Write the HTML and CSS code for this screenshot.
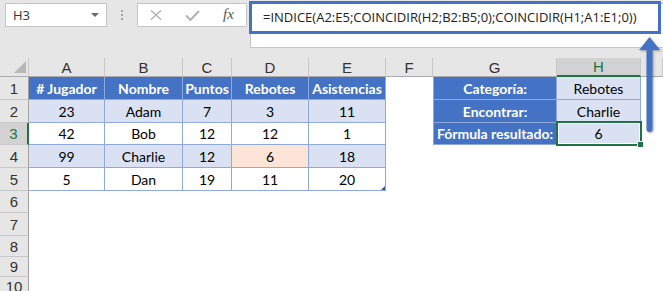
FILE: index.html
```html
<!DOCTYPE html>
<html lang="es">
<head>
<meta charset="utf-8">
<title>INDICE y COINCIDIR</title>
<link rel="stylesheet" href="styles.css">
</head>
<body>
<div class="app">
  <div class="topbar">
    <div class="namebox"><span class="name">H3</span><span class="caret"></span></div>
    <div class="grip"><i></i><i></i><i></i></div>
    <div class="fnbox">
      <svg class="ic-x" width="12" height="10" viewBox="0 0 12 10"><path d="M1 0.5 L11 9.5 M11 0.5 L1 9.5"/></svg>
      <svg class="ic-check" width="15" height="11" viewBox="0 0 15 11"><path d="M1 5.5 L5.5 10 L14 1"/></svg>
      <span class="fx">fx</span>
    </div>
    <div class="formula">
      <div class="formula-text">=INDICE(A2:E5;COINCIDIR(H2;B2:B5;0);COINCIDIR(H1;A1:E1;0))</div>
      <div class="highlight"></div>
    </div>
  </div>

  <div class="sheet">
    <div class="ch corner"><span class="tri"></span></div>
    <div class="ch">A</div>
    <div class="ch">B</div>
    <div class="ch">C</div>
    <div class="ch">D</div>
    <div class="ch">E</div>
    <div class="ch">F</div>
    <div class="ch">G</div>
    <div class="ch sel">H</div>
    <div class="ch"></div>

    <div class="rh">1</div>
    <div class="c hd">#&nbsp;Jugador</div>
    <div class="c hd">Nombre</div>
    <div class="c hd">Puntos</div>
    <div class="c hd">Rebotes</div>
    <div class="c hd">Asistencias</div>
    <div class="e"></div>
    <div class="c hd gl">Categoría:</div>
    <div class="c band">Rebotes</div>
    <div class="e"></div>

    <div class="rh">2</div>
    <div class="c band">23</div>
    <div class="c band">Adam</div>
    <div class="c band">7</div>
    <div class="c band">3</div>
    <div class="c band">11</div>
    <div class="e"></div>
    <div class="c hd gl">Encontrar:</div>
    <div class="c band">Charlie</div>
    <div class="e"></div>

    <div class="rh sel">3</div>
    <div class="c">42</div>
    <div class="c">Bob</div>
    <div class="c">12</div>
    <div class="c">12</div>
    <div class="c">1</div>
    <div class="e"></div>
    <div class="c hd gl">Fórmula resultado:</div>
    <div class="c band active">6<span class="selbox"><span class="handle"></span></span></div>
    <div class="e"></div>

    <div class="rh">4</div>
    <div class="c band">99</div>
    <div class="c band">Charlie</div>
    <div class="c band">12</div>
    <div class="c peach">6</div>
    <div class="c band">18</div>
    <div class="e span4"></div>

    <div class="rh">5</div>
    <div class="c">5</div>
    <div class="c">Dan</div>
    <div class="c">19</div>
    <div class="c">11</div>
    <div class="c last">20<span class="resize"></span></div>
    <div class="e span4"></div>

    <div class="rh">6</div><div class="e span9"></div>
    <div class="rh">7</div><div class="e span9"></div>
    <div class="rh">8</div><div class="e span9"></div>
    <div class="rh">9</div><div class="e span9"></div>
    <div class="rh">10</div><div class="e span9"></div>
  </div>

  <svg class="arrow" width="27" height="106" viewBox="0 0 27 106">
    <polygon points="13.5,3 24,16 3,16"/>
    <rect x="10.5" y="14" width="6" height="84" rx="3"/>
  </svg>
</div>
</body>
</html>
```

FILE: styles.css
```css
* { box-sizing: border-box; }
html, body { margin: 0; padding: 0; }
body {
  width: 663px;
  height: 291px;
  overflow: hidden;
  background: #fff;
  font-family: Lato, "Liberation Sans", sans-serif;
}
.app {
  position: relative;
  width: 663px;
  height: 291px;
  overflow: hidden;
}

/* ---------- top bar ---------- */
.topbar {
  height: 58px;
  background: #e6e6e6;
  display: flex;
  align-items: flex-start;
  padding-top: 3px;
}
.namebox {
  margin-left: 5px;
  width: 102px;
  height: 24px;
  background: #fff;
  border: 1px solid #c6c6c6;
  display: flex;
  align-items: center;
  justify-content: space-between;
  padding: 0 7px;
}
.name {
  font: 13px "Open Sans", sans-serif;
  color: #333;
}
.caret {
  width: 0;
  height: 0;
  border-left: 4px solid transparent;
  border-right: 4px solid transparent;
  border-top: 4px solid #6b6b6b;
}
.grip {
  margin-left: 14px;
  margin-top: 7px;
  display: flex;
  flex-direction: column;
  gap: 2px;
}
.grip i {
  display: block;
  width: 2px;
  height: 2px;
  background: #a6a6a6;
}
.fnbox {
  margin-left: 14px;
  width: 110px;
  height: 24px;
  background: #fff;
  border: 1px solid #c6c6c6;
  display: flex;
  align-items: center;
}
.fnbox svg { display: block; fill: none; stroke: #b3b3b3; }
.ic-x { margin-left: 12px; stroke-width: 1.4; }
.ic-check { margin-left: 23px; stroke-width: 2; }
.fx {
  margin-left: 23px;
  font: italic 15px "Liberation Serif", serif;
  color: #555;
  margin-top: -2px;
}
.formula {
  position: relative;
  margin-left: 3px;
  flex: 1;
  height: 45px;
  background: #fff;
  border: 1px solid #c6c6c6;
  border-right: none;
}
.formula-text {
  padding: 4px 0 0 12px;
  font: 13px/18px "Open Sans", sans-serif;
  color: #222;
  white-space: nowrap;
}
.highlight {
  position: absolute;
  left: -2px;
  top: -3px;
  width: 412px;
  height: 33px;
  border: 3px solid #4472c4;
}

/* ---------- sheet ---------- */
.sheet {
  display: grid;
  grid-template-columns: 29px 76px 78px 49px 77px 77px 47px 124px 84px 1fr;
  grid-template-rows: 19px 23px 23px 22px 23px 23px 22px 23px 21px 20px 20px;
}
.ch, .rh {
  background: #e6e6e6;
  font: 15px "Liberation Sans", Arial, sans-serif;
  color: #333;
  display: flex;
  align-items: center;
  justify-content: center;
}
.ch {
  border-right: 1px solid #c8c8c8;
  border-bottom: 1px solid #ababab;
}
.ch.corner {
  justify-content: flex-end;
  align-items: flex-end;
  padding: 0 2px 3px 0;
}
.tri {
  width: 0;
  height: 0;
  border-left: 12px solid transparent;
  border-bottom: 12px solid #b7b7b7;
}
.rh {
  border-right: 1px solid #a0a0a0;
  border-bottom: 1px solid #c8c8c8;
}
.ch.sel {
  background: #d2d2d2;
  color: #217346;
  border-bottom: 2px solid #217346;
}
.rh.sel {
  background: #d2d2d2;
  color: #217346;
  border-right: 2px solid #217346;
}

.c {
  display: flex;
  align-items: center;
  justify-content: center;
  font-size: 14px;
  color: #000;
  background: #fff;
  border-right: 1px solid #8ea9db;
  border-bottom: 1px solid #8ea9db;
  white-space: nowrap;
}
.c.hd {
  background: #4472c4;
  color: #fff;
  font-weight: 700;
}
.c.gl { border-left: 1px solid #8ea9db; }
.c.band { background: #d9e1f2; }
.c.peach { background: #fce4d6; }
.e { background: #fff; }
.span4 { grid-column: span 4; }
.span9 { grid-column: span 9; }

.active { position: relative; }
.selbox {
  position: absolute;
  left: -1px;
  top: -2px;
  right: -2px;
  bottom: -2px;
  border: 2px solid #217346;
  box-shadow: inset 0 0 0 1px #fff;
  z-index: 2;
}
.handle {
  position: absolute;
  right: -4px;
  bottom: -4px;
  width: 7px;
  height: 7px;
  background: #217346;
  border: 1px solid #fff;
}
.last { position: relative; }
.resize {
  position: absolute;
  right: 0;
  bottom: 0;
  width: 0;
  height: 0;
  border-left: 4px solid transparent;
  border-bottom: 4px solid #2f55a4;
}

/* ---------- annotation arrow ---------- */
.arrow {
  position: absolute;
  left: 636px;
  top: 34px;
  fill: #4472c4;
  filter: drop-shadow(1px 1px 1px rgba(0, 0, 0, 0.35));
  z-index: 5;
}
```
